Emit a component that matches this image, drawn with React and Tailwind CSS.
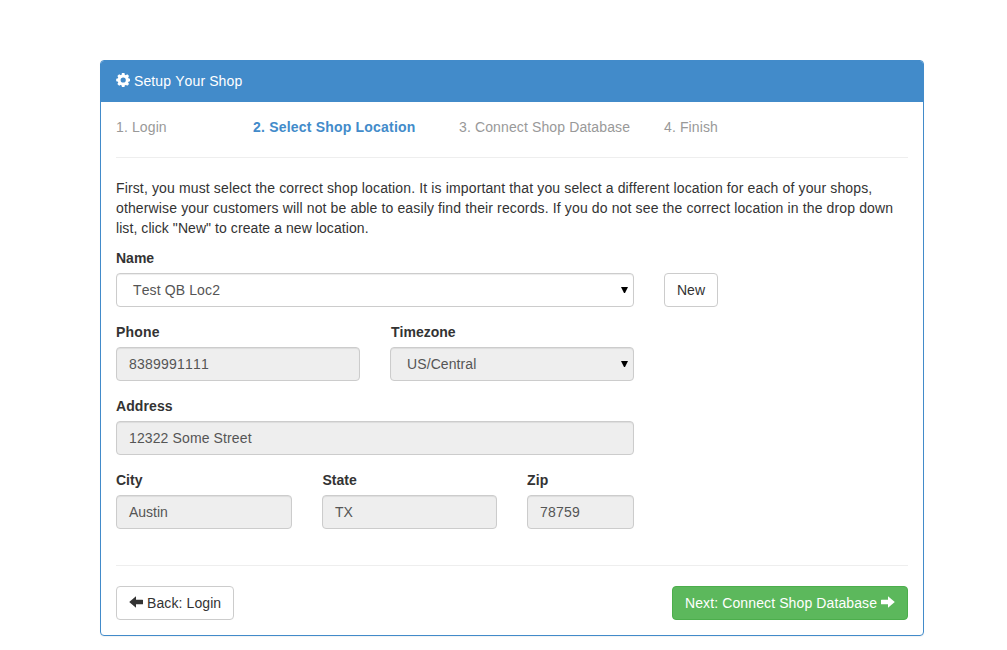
import React from "react";

function Cog() {
  const teeth = [0, 45, 90, 135, 180, 225, 270, 315];
  return (
    <svg className="-mt-[2px] h-[14px] w-[14px] shrink-0" viewBox="-7.2 -7 14 14" fill="currentColor">
      <circle r="4.1" fill="none" stroke="currentColor" strokeWidth="3" />
      {teeth.map((angle) => (
        <path key={angle} d="M-1.7 -4.6L-1.3 -7H1.3L1.7 -4.6Z" transform={`rotate(${angle})`} />
      ))}
    </svg>
  );
}

function Arrow({ className = "" }) {
  return (
    <svg className={`-mt-[2px] h-[12px] w-[14px] shrink-0 ${className}`} viewBox="0 0 14 12" fill="currentColor">
      <path d="M0.2 6L7 0.3V3.8H13.5Q14 3.8 14 4.3V7.7Q14 8.2 13.5 8.2H7V11.7Z" />
    </svg>
  );
}

function Field({ label, value, width, select, enabled, spacing = "", labelSpacing = "" }) {
  return (
    <div className={width}>
      <div className={`mb-[5px] h-5 font-bold ${labelSpacing}`}>{label}</div>
      <div
        className={`flex h-[34px] items-center justify-between rounded-[4px] border border-[#ccc] text-[#555] shadow-[inset_0_1px_1px_rgba(0,0,0,0.075)] ${
          select ? "pl-4 pr-[5px]" : "px-3"
        } ${enabled ? "bg-white" : "bg-[#eee]"}`}
      >
        <span className={spacing}>{value}</span>
        {select && (
          <svg className="h-[6px] w-[7px]" viewBox="0 0 7 6" fill="#000">
            <path d="M0 0H7L4 6H3Z" />
          </svg>
        )}
      </div>
    </div>
  );
}

export default function App() {
  return (
    <div className="h-[650px] bg-white pl-[100px] pt-[60px] font-['Liberation_Sans',Arial,sans-serif] text-[14px] leading-5 text-[#333] [font-kerning:none]">
      <div className="h-[576px] w-[824px] overflow-hidden rounded-[4px] border border-[#428bca] shadow-[0_1px_1px_rgba(0,0,0,0.05)]">
        <div className="flex h-[41px] items-center gap-1 bg-[#428bca] px-[15px] pb-[2px] text-white">
          <Cog />
          <span className="tracking-[0.11px]">Setup Your Shop</span>
        </div>
        <div className="px-[15px] pt-[15px]">
          <div className="flex h-[41px] border-b border-[#eee] text-[#999]">
            <span className="w-[137px] tracking-[0.12px]">1. Login</span>
            <span className="w-[206px] font-bold tracking-[0.2px] text-[#428bca]">2. Select Shop Location</span>
            <span className="w-[205px] tracking-[0.125px]">3. Connect Shop Database</span>
            <span className="tracking-[0.12px]">4. Finish</span>
          </div>
          <p className="mt-5 mb-[10px] whitespace-nowrap">
            <span className="block tracking-[0.136px]">First, you must select the correct shop location. It is important that you select a different location for each of your shops,</span>
            <span className="block tracking-[0.133px]">otherwise your customers will not be able to easily find their records. If you do not see the correct location in the drop down</span>
            <span className="block tracking-[0.07px]">list, click "New" to create a new location.</span>
          </p>
          <div className="flex flex-col gap-[15px]">
            <div className="flex items-end gap-[30px]">
              <Field label="Name" value="Test QB Loc2" width="w-[518px]" select enabled spacing="tracking-[0.12px]" />
              <button className="h-[34px] w-[54px] rounded-[4px] border border-[#ccc] bg-white">New</button>
            </div>
            <div className="flex gap-[30px]">
              <Field label="Phone" value="8389991111" width="w-[244px]" spacing="tracking-[0.21px]" labelSpacing="tracking-[0.2px]" />
              <Field label="Timezone" value="US/Central" width="w-[244px]" select spacing="tracking-[0.1px]" labelSpacing="pl-px" />
            </div>
            <Field label="Address" value="12322 Some Street" width="w-[518px]" spacing="tracking-[0.12px]" labelSpacing="tracking-[0.1px]" />
            <div className="flex gap-[30px]">
              <Field label="City" value="Austin" width="w-[176px]" />
              <Field label="State" value="TX" width="w-[175px]" labelSpacing="pl-[0.5px]" />
              <Field label="Zip" value="78759" width="w-[107px]" spacing="tracking-[0.2px]" labelSpacing="tracking-[0.1px]" />
            </div>
          </div>
          <div className="mt-9 flex justify-between border-t border-[#eee] pt-5">
            <button className="flex h-[34px] w-[118px] items-center gap-1 whitespace-nowrap rounded-[4px] border border-[#ccc] bg-white pl-3">
              <Arrow />
              <span className="tracking-[0.1px]">Back: Login</span>
            </button>
            <button className="flex h-[34px] w-[236px] items-center gap-1 whitespace-nowrap rounded-[4px] border border-[#4cae4c] bg-[#5cb85c] pl-3 text-white">
              <span className="tracking-[0.11px]">Next: Connect Shop Database</span>
              <Arrow className="rotate-180" />
            </button>
          </div>
        </div>
      </div>
    </div>
  );
}
